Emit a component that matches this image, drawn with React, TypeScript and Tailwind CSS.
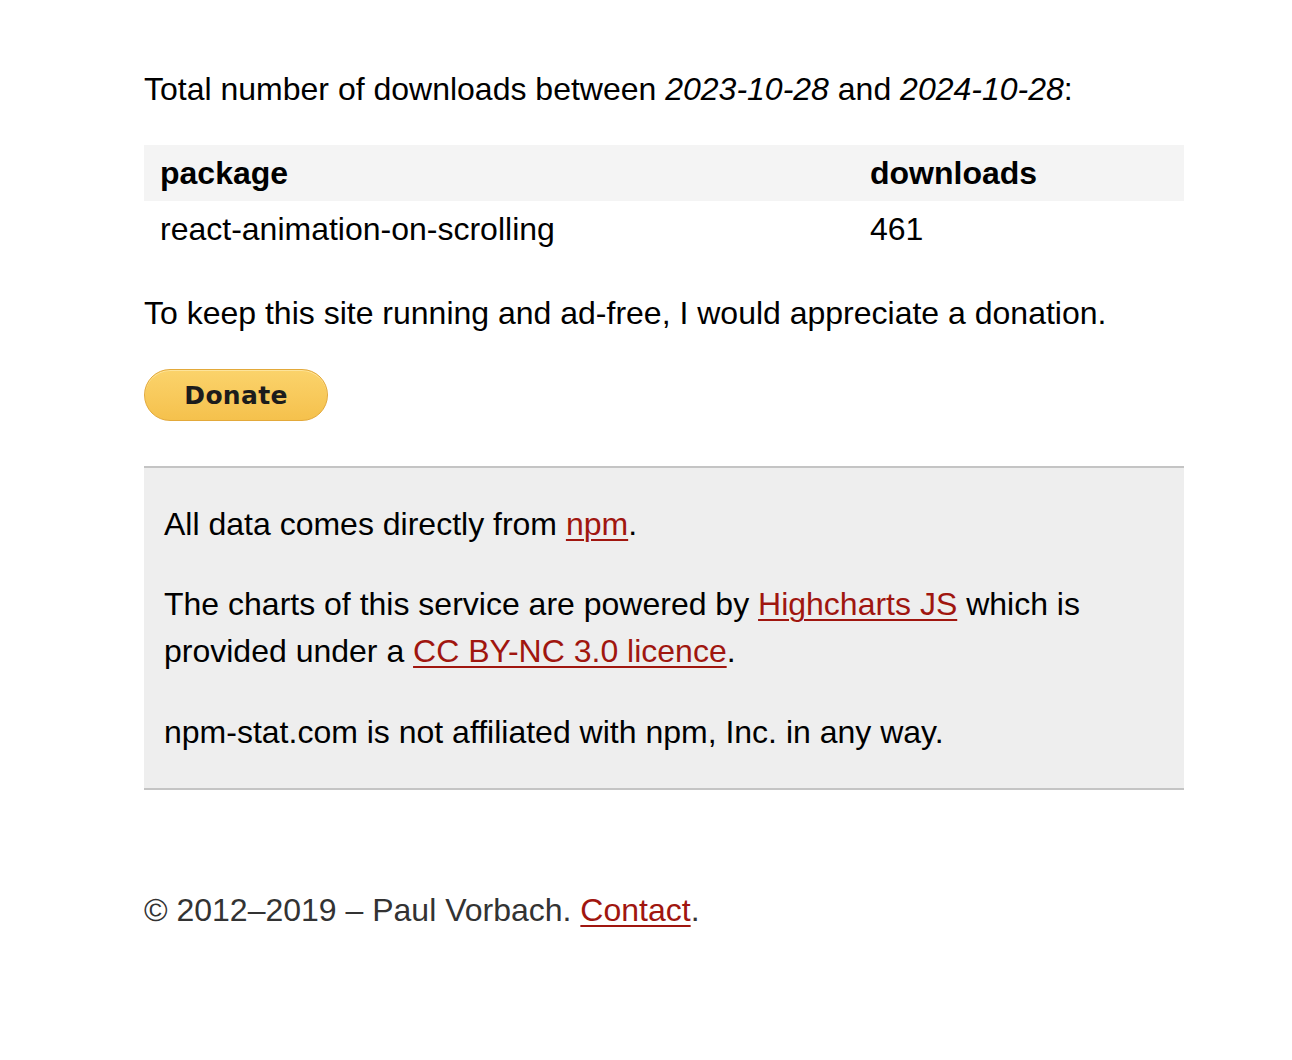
export default function App() {
  return (
    <div className="min-h-screen bg-white font-['Liberation_Sans',Arial,sans-serif] text-[32px] leading-[47px] text-black">
      <div className="ml-[144px] w-[1040px] pt-[66px]">
        {/* Summary */}
        <p>
          Total number of downloads between <em>2023-10-28</em> and <em>2024-10-28</em>:
        </p>

        <table className="mt-[32px] w-full border-collapse text-left">
          <thead>
            <tr className="h-[56px] bg-[#f4f4f4]">
              <th className="w-[726px] px-[16px] font-bold">package</th>
              <th className="px-0 font-bold">downloads</th>
            </tr>
          </thead>
          <tbody>
            <tr className="h-[56px]">
              <td className="px-[16px]">react-animation-on-scrolling</td>
              <td>461</td>
            </tr>
          </tbody>
        </table>

        <p className="mt-[33px]">To keep this site running and ad-free, I would appreciate a donation.</p>

        {/* Donate button */}
        <div className="mt-[32px] flex">
          <button className="flex h-[52px] w-[184px] items-center justify-center rounded-full border border-[#e3a93a] bg-gradient-to-b from-[#fbd36b] to-[#f5c14c] font-['DejaVu_Sans',Verdana,sans-serif] text-[25px] font-bold leading-none tracking-[0.3px] text-[#1c1c1c] shadow-[inset_0_1px_0_#fde49b]">
            Donate
          </button>
        </div>

        {/* Info box */}
        <div className="mt-[45px] border-y-2 border-[#c4c4c4] bg-[#eeeeee] px-[20px] pt-[33px] pb-[32px]">
          <p>
            All data comes directly from{' '}
            <a href="#" className="text-[#a0160f] underline decoration-2 underline-offset-[4px]">npm</a>.
          </p>
          <p className="mt-[33px]">
            The charts of this service are powered by{' '}
            <a href="#" className="text-[#a0160f] underline decoration-2 underline-offset-[4px]">Highcharts JS</a> which is
            <br />
            provided under a{' '}
            <a href="#" className="text-[#a0160f] underline decoration-2 underline-offset-[4px]">CC BY-NC 3.0 licence</a>.
          </p>
          <p className="mt-[34px]">npm-stat.com is not affiliated with npm, Inc. in any way.</p>
        </div>

        {/* Footer */}
        <footer className="mt-[97px] pb-[110px] text-[#333333]">
          © 2012–2019 – Paul Vorbach.{' '}
          <a href="#" className="text-[#a0160f] underline decoration-2 underline-offset-[4px]">Contact</a>.
        </footer>
      </div>
    </div>
  );
}
